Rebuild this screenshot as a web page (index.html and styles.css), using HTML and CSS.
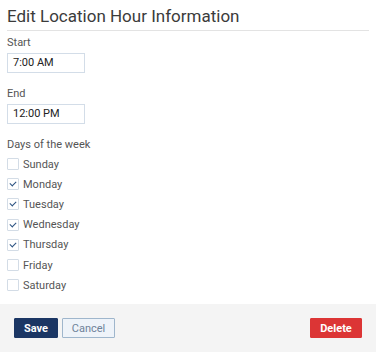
FILE: index.html
```html
<html>

<head>
    <link rel="stylesheet" href="styles.css">
</head>

<body>
    <div class="modal">
        <div class="content">
            <h2 class="title">Edit Location Hour Information</h2>

            <div class="field">
                <label>Start</label>
                <div class="time-input">7:00 AM</div>
            </div>

            <div class="field">
                <label>End</label>
                <div class="time-input">12:00 PM</div>
            </div>

            <div class="field days">
                <label>Days of the week</label>
                <div class="day"><span class="box"></span>Sunday</div>
                <div class="day"><span class="box checked"></span>Monday</div>
                <div class="day"><span class="box checked"></span>Tuesday</div>
                <div class="day"><span class="box checked"></span>Wednesday</div>
                <div class="day"><span class="box checked"></span>Thursday</div>
                <div class="day"><span class="box"></span>Friday</div>
                <div class="day"><span class="box"></span>Saturday</div>
            </div>
        </div>

        <div class="footer">
            <button class="btn save">Save</button>
            <button class="btn cancel">Cancel</button>
            <button class="btn delete">Delete</button>
        </div>
    </div>
</body>

</html>
```

FILE: styles.css
```css
body {
    margin: 0;
    background: #ffffff;
    font-family: Roboto, "Liberation Sans", sans-serif;
    color: #444444;
}

.modal {
    width: 376px;
    height: 352px;
    display: flex;
    flex-direction: column;
}

.content {
    padding: 0 7px;
    flex: 1;
}

.title {
    margin: 0;
    padding-top: 6px;
    padding-bottom: 4px;
    font-size: 17px;
    font-weight: 400;
    line-height: 20px;
    color: #3b3b3b;
    border-bottom: 1px solid #e3e3e3;
}

.field {
    margin-top: 5px;
}

.field + .field {
    margin-top: 14px;
}

.field label {
    display: block;
    font-size: 11px;
    line-height: 14px;
    color: #555555;
    margin-bottom: 3px;
}

.time-input {
    box-sizing: border-box;
    width: 78px;
    height: 20px;
    border: 1px solid #d3dde8;
    padding: 0 5px;
    font-size: 11px;
    line-height: 18px;
    color: #222222;
}

.days label {
    margin-bottom: 2px;
}

.day {
    display: flex;
    align-items: center;
    gap: 4px;
    height: 20.2px;
    font-size: 11px;
    color: #555555;
}

.box {
    box-sizing: border-box;
    width: 12px;
    height: 12px;
    border: 1px solid #d3dce6;
    border-radius: 1px;
    position: relative;
}

.box.checked::after {
    content: "";
    position: absolute;
    left: 3px;
    top: 1px;
    width: 3px;
    height: 5px;
    border-right: 1.6px solid #2b5282;
    border-bottom: 1.6px solid #2b5282;
    transform: rotate(45deg);
}

.footer {
    height: 48px;
    background: #f4f4f4;
    display: flex;
    align-items: center;
    gap: 4px;
    padding: 0 14px;
}

.btn {
    box-sizing: border-box;
    height: 20px;
    padding: 0;
    font-family: Roboto, "Liberation Sans", sans-serif;
    font-size: 11px;
    border-radius: 1px;
    cursor: pointer;
}

.save {
    width: 44px;
    background: #1b3664;
    border: 1px solid #1b3664;
    color: #ffffff;
    font-weight: 700;
}

.cancel {
    width: 53px;
    background: #eef3f9;
    border: 1px solid #9fb6cc;
    color: #6e8299;
}

.delete {
    margin-left: auto;
    width: 52px;
    background: #dc3535;
    border: 1px solid #dc3535;
    color: #ffffff;
    font-weight: 700;
}
```
